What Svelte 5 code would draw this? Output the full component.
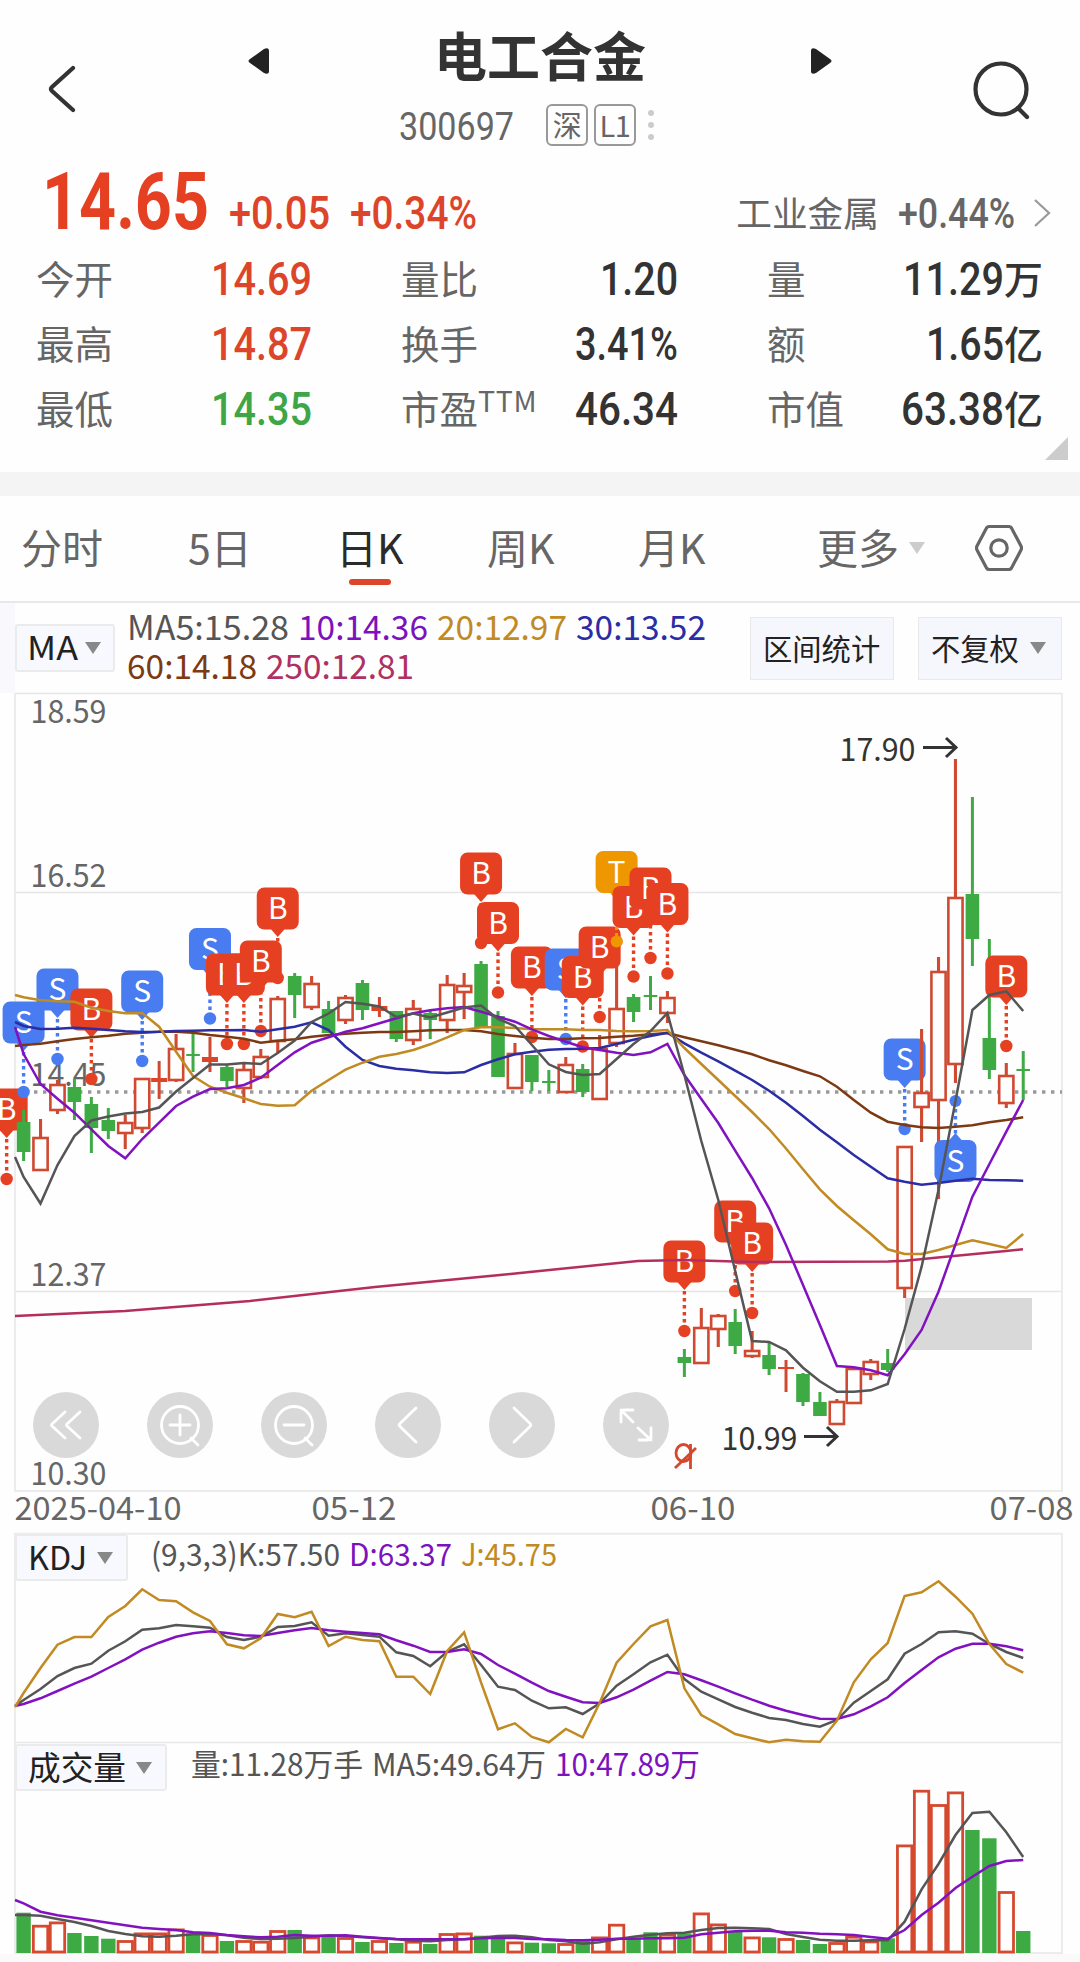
<script>
  // Horizontal position of candle i
  const STEP = 16.943;
  const cx = (i) => 23.6 + i * STEP;

  // Joins one y value per candle into a polyline, starting at the frame edge
  function line(start, ys) {
    return [`15,${start}`, ...ys.map((y, i) => `${cx(i).toFixed(1)},${y}`)].join(" ");
  }

  const quotes = [
    { label: "今开", value: "14.69", w: 101, tone: "up" },
    { label: "量比", value: "1.20", w: 78 },
    { label: "量", value: "11.29", w: 101, unit: "万" },
    { label: "最高", value: "14.87", w: 101, tone: "up" },
    { label: "换手", value: "3.41%", w: 103 },
    { label: "额", value: "1.65", w: 78, unit: "亿" },
    { label: "最低", value: "14.35", w: 101, tone: "down" },
    { label: "市盈", sup: "TTM", value: "46.34", w: 103 },
    { label: "市值", value: "63.38", w: 103, unit: "亿" },
  ];

  const tabs = ["分时", "5日", "日K", "周K", "月K"];
  let active = $state("日K");

  // kind, high, body top, body bottom, low (r = hollow, x = filled red, g = green)
  const candles = [
    ["g", 1110, 1122, 1152, 1161], ["r", 1119, 1137, 1171, 1171], ["r", 1080, 1084, 1111, 1114],
    ["g", 1079, 1087, 1102, 1120], ["g", 1097, 1104, 1128, 1153], ["g", 1108, 1120, 1131, 1139],
    ["r", 1115, 1122, 1134, 1149], ["r", 1078, 1078, 1129, 1133], ["x", 1061, 1078, 1082, 1099],
    ["r", 1034, 1048, 1081, 1082], ["g", 1034, 1054, 1056, 1072], ["x", 1037, 1057, 1062, 1072],
    ["g", 1064, 1067, 1081, 1087], ["r", 1064, 1069, 1089, 1103], ["r", 1049, 1056, 1078, 1079],
    ["r", 996, 998, 1042, 1053], ["g", 973, 976, 995, 1018], ["r", 976, 983, 1008, 1010],
    ["g", 1001, 1009, 1033, 1033], ["r", 995, 997, 1021, 1024], ["g", 980, 983, 1010, 1020],
    ["x", 997, 1006, 1011, 1017], ["g", 1011, 1011, 1039, 1042], ["r", 1000, 1008, 1041, 1045],
    ["g", 1010, 1013, 1020, 1039], ["r", 975, 984, 1021, 1033], ["r", 973, 985, 993, 1019],
    ["g", 961, 964, 1027, 1027], ["g", 1011, 1016, 1077, 1077], ["r", 1043, 1053, 1089, 1089],
    ["g", 1055, 1055, 1082, 1091], ["g", 1070, 1081, 1083, 1091], ["r", 1057, 1064, 1093, 1093],
    ["g", 1064, 1069, 1092, 1097], ["r", 1035, 1048, 1100, 1100], ["r", 960, 1008, 1044, 1047],
    ["g", 994, 997, 1012, 1022], ["g", 976, 995, 997, 1010], ["r", 991, 997, 1014, 1023],
    ["g", 1349, 1357, 1363, 1377], ["r", 1308, 1327, 1364, 1364], ["r", 1314, 1315, 1330, 1347],
    ["g", 1309, 1322, 1346, 1354], ["r", 1331, 1350, 1357, 1358], ["g", 1343, 1355, 1369, 1375],
    ["x", 1360, 1367, 1369, 1392], ["g", 1373, 1374, 1402, 1406], ["g", 1392, 1402, 1416, 1416],
    ["r", 1399, 1401, 1425, 1425], ["r", 1367, 1368, 1404, 1404], ["r", 1359, 1361, 1375, 1380],
    ["g", 1349, 1363, 1370, 1372], ["r", 1146, 1146, 1289, 1298], ["r", 1029, 1092, 1108, 1142],
    ["r", 957, 971, 1101, 1199], ["r", 759, 897, 1065, 1083], ["g", 797, 894, 939, 966],
    ["g", 939, 1038, 1070, 1079], ["r", 1063, 1075, 1104, 1108], ["g", 1051, 1069, 1071, 1100],
  ];

  // Trade marks: candle index, letter, top of the badge
  const backMarks = [[-1, "B", 1089], [52, "S", 1039]];
  const marks = [
    [0, "S", 1002], [2, "S", 969], [4, "B", 989], [7, "S", 971], [11, "S", 928.5],
    [12, "B", 954], [13, "B", 954], [14, "B", 941], [15, "B", 888], [27, "B", 853],
    [28, "B", 902.5], [30, "B", 947], [32, "S", 949], [33, "B", 956.5], [34, "B", 927],
    [35, "T", 851.5], [36, "B", 886.5], [37, "B", 868], [38, "B", 883.5], [39, "B", 1241],
    [42, "B", 1201], [43, "B", 1223], [58, "B", 956],
  ];
  const markColor = { B: "#e64023", S: "#497cf0", T: "#ee9700" };

  const averages = [
    { color: "#b52d5e", points: "15,1316 125,1311 250,1301 375,1287 500,1275 638,1261 684,1260 718,1261 751,1262 888,1261.5 905,1260.7 938,1257.5 972,1254.3 1006,1251 1023,1249.3" },
    { color: "#7d3a12", points: line(1046, [1045, 1043.7, 1041.3, 1039, 1037.3, 1035.7, 1033.7, 1032.7, 1031.7, 1031.7, 1032.7, 1035, 1036.7, 1038.7, 1042.7, 1040.7, 1039.3, 1036.7, 1035, 1033.7, 1032.7, 1032, 1032, 1031.3, 1030.3, 1030, 1030, 1031.3, 1034, 1036, 1037.7, 1039, 1039, 1038.3, 1038, 1036.7, 1035.7, 1034.3, 1033, 1037.3, 1041.3, 1045.3, 1049.7, 1054.3, 1060.3, 1065.3, 1071, 1076.3, 1086.7, 1100, 1112.7, 1121.7, 1125, 1127.3, 1128, 1126.7, 1125.3, 1122.3, 1120, 1117.3]) },
    { color: "#2b2da5", points: line(1022, [1026, 1029, 1028.7, 1027.7, 1028.7, 1030, 1031.3, 1032, 1031.7, 1031, 1030.7, 1030.3, 1030.3, 1030, 1031.7, 1029.3, 1026.7, 1022.3, 1030, 1046.7, 1060, 1066, 1068.7, 1070.3, 1072.3, 1073, 1072.3, 1065, 1059.3, 1054.3, 1051.7, 1049.7, 1049, 1048.7, 1048, 1044, 1039.7, 1036, 1032.7, 1043.3, 1052.7, 1061.3, 1070.7, 1080, 1090.7, 1102.7, 1116, 1129.7, 1142.3, 1155, 1166.7, 1178.3, 1181.7, 1184.7, 1183, 1180.7, 1178.7, 1180, 1180.3, 1180.7]) },
    { color: "#c18a22", points: line(995, [997.3, 1000.3, 1001.3, 1001.7, 1007.7, 1011, 1013.3, 1013, 1026.7, 1051.7, 1076, 1086.7, 1092.7, 1098.3, 1104, 1105.7, 1105.3, 1090.7, 1080, 1069.7, 1062.7, 1056.7, 1054, 1050, 1044.3, 1037.3, 1030, 1027.3, 1027.3, 1028, 1029.3, 1029.3, 1029.3, 1030, 1030, 1031, 1031.3, 1031, 1030, 1048, 1064, 1080, 1096, 1112, 1129, 1148.5, 1169.3, 1189.3, 1206, 1220.3, 1234.3, 1249.3, 1254, 1254, 1250, 1245, 1240.3, 1244, 1248, 1234]) },
    { color: "#8212c0", points: line(1027, [1054, 1084, 1098.7, 1112.7, 1129.3, 1146, 1158.3, 1139, 1122.7, 1106, 1096.7, 1089, 1088.3, 1085, 1077.7, 1065, 1052.3, 1042.7, 1037.3, 1031.7, 1028.3, 1023.3, 1018.3, 1013.3, 1010.3, 1008.3, 1007, 1011.7, 1016.7, 1021.7, 1029.3, 1036, 1041.7, 1047.3, 1050, 1052.7, 1055, 1052.3, 1044, 1075, 1099, 1123, 1150.7, 1178, 1208.3, 1245, 1285, 1325, 1366, 1367.3, 1370.3, 1375.3, 1354.3, 1330, 1291.7, 1244.3, 1196.7, 1164, 1131.7, 1100]) },
    { color: "#555", points: line(1157, [1177, 1203.5, 1165, 1136, 1120.5, 1116.5, 1113.5, 1112, 1107.5, 1091.5, 1078, 1064.5, 1064.5, 1063, 1064, 1053, 1040.5, 1022, 1013.5, 1002, 1003.8, 1006.5, 1017, 1013.5, 1017.5, 1012.5, 1007.5, 1005.5, 1019, 1026, 1045, 1064.3, 1072, 1075, 1074, 1059, 1044, 1031, 1013, 1075, 1141, 1200, 1271, 1341, 1342, 1350.3, 1367.7, 1381.3, 1391.7, 1391.7, 1390.3, 1384, 1329, 1266.7, 1190, 1101, 1010, 995, 991.3, 1011]) },
  ];

  const kdj = [
    { color: "#555", points: line(1706, [1700, 1689, 1676, 1668, 1663.7, 1650.7, 1641.3, 1629.7, 1628.3, 1625, 1626.3, 1627.7, 1637, 1640, 1636.7, 1627, 1626, 1622.3, 1635.7, 1633.3, 1635, 1636.7, 1652.3, 1656, 1666.3, 1651.7, 1644.3, 1665, 1686.7, 1690, 1700.7, 1708.3, 1707.3, 1714, 1703.3, 1685.7, 1674.3, 1662.3, 1654.7, 1679, 1691.7, 1699.3, 1707, 1712.7, 1718, 1720, 1724, 1726.7, 1720, 1702.7, 1691, 1679.3, 1653.7, 1644, 1632.3, 1631.3, 1633.7, 1644, 1652, 1658]) },
    { color: "#8212c0", points: line(1706, [1704, 1698.3, 1691, 1683.7, 1676.7, 1668, 1659.3, 1649.7, 1642.7, 1636.7, 1633.3, 1631.3, 1633, 1635.3, 1636, 1633, 1630.3, 1628, 1630.3, 1631.7, 1633, 1634.3, 1640.3, 1645.7, 1652, 1652, 1649.3, 1654, 1665, 1673.7, 1682.7, 1691, 1696.7, 1702.3, 1703, 1697.3, 1689.7, 1680.7, 1672, 1674.3, 1680.3, 1686.7, 1693.3, 1699.7, 1705.7, 1710.7, 1715, 1718.7, 1719, 1714.3, 1706.3, 1697.3, 1683, 1670, 1657.3, 1648.7, 1643.7, 1643.7, 1646.3, 1650.3]) },
    { color: "#c18a22", points: line(1707, [1693, 1668, 1644.7, 1637, 1637, 1617, 1606, 1589.3, 1600, 1601.3, 1612.3, 1621, 1644.3, 1648.3, 1638.3, 1614, 1617.3, 1611.7, 1646, 1636.7, 1640, 1641.3, 1676.7, 1676.7, 1694, 1651, 1632.3, 1682.7, 1729.3, 1723.3, 1737, 1742.3, 1729, 1737.3, 1702.7, 1662.7, 1644, 1626.3, 1620, 1688.3, 1715, 1724.3, 1734, 1738.3, 1742.3, 1739.7, 1741.3, 1741.7, 1720.7, 1682.3, 1659.3, 1643, 1596, 1592.3, 1581.3, 1596.7, 1613.7, 1644, 1664, 1672.7]) },
  ];

  const BASE = 1953;
  const volumeTops = [1912.7, 1925, 1921.7, 1933, 1936, 1938.7, 1940.3, 1932.7, 1932.7, 1928.7, 1933.3, 1934.3, 1941, 1940.3, 1941, 1930.3, 1930, 1936.7, 1936.7, 1937.3, 1942, 1940.3, 1943, 1941, 1944, 1933.3, 1932.7, 1935.7, 1936, 1941.7, 1942.7, 1943.3, 1943.3, 1940.7, 1936.7, 1924, 1939, 1932.3, 1934, 1933.3, 1912.7, 1923.7, 1931.7, 1936.7, 1937.3, 1938.3, 1940, 1944, 1942.3, 1936, 1940.7, 1938.3, 1844.7, 1790, 1804.3, 1791.7, 1830, 1838.3, 1891.3, 1931];
  const volumeKinds = "grrgggrrrrgrgrrrgrgrgrgrgrrggrggrgrrggrgrrgrgrggrrrgrrrrggrg";
  const volumeLines = [
    { color: "#555", points: line(1915, [1915, 1915.7, 1919, 1922, 1926, 1931, 1934, 1936.3, 1936.7, 1935.7, 1934.3, 1934, 1935.3, 1937.7, 1939, 1938.7, 1938, 1936.7, 1935.3, 1936, 1937.3, 1938.3, 1939.3, 1940.7, 1941.3, 1940, 1939.3, 1937.7, 1936, 1935.7, 1937.3, 1940, 1941.3, 1943.7, 1942.3, 1939.3, 1936.7, 1934.7, 1933.3, 1932.7, 1930, 1928, 1927.7, 1928.3, 1929, 1934, 1937, 1939.7, 1940.7, 1940.7, 1940.3, 1940.3, 1921.7, 1889.3, 1864, 1835, 1813, 1811.7, 1832.3, 1857]) },
    { color: "#8212c0", points: line(1900, [1903.3, 1911.7, 1915.3, 1917.7, 1920.3, 1922.7, 1925.3, 1927.7, 1929, 1930, 1932.3, 1933, 1935, 1936.3, 1937.3, 1936.7, 1935, 1935.7, 1935.7, 1935.3, 1936.7, 1938, 1939, 1939.3, 1939.3, 1939.3, 1939.3, 1938.3, 1937.7, 1938, 1939, 1939.3, 1940, 1940.3, 1939.7, 1938.7, 1938.7, 1938.3, 1938.3, 1937.7, 1934.3, 1932.7, 1931.3, 1930.7, 1930.7, 1932.3, 1932.7, 1933.7, 1934.3, 1935, 1937, 1938.7, 1930, 1915, 1902.7, 1888, 1876.7, 1866, 1861, 1860]) },
  ];
</script>

<!-- Single line of text set to a fixed advance width -->
{#snippet fit(text, w, size, cls = "")}
  <svg class="fit {cls}" width={w} height={size}>
    <text x="0" y={size * 0.86} font-size={size} textLength={w} lengthAdjust="spacingAndGlyphs">{text}</text>
  </svg>
{/snippet}

{#snippet label(text, x, y, w, size = 31.5)}
  <text {x} {y} font-size={size} textLength={w} lengthAdjust="spacingAndGlyphs">{text}</text>
{/snippet}

{#snippet caret()}
  <svg class="caret" width="16" height="12" viewBox="0 0 16 12"><path d="M0 0H16L8 12Z" fill="currentColor" /></svg>
{/snippet}

{#snippet candle(i)}
  {@const [kind, high, top, bottom, low] = candles[i]}
  {@const x = cx(i)}
  {#if kind === "r"}
    <path d="M{x} {high}V{top}M{x} {bottom}V{low}" stroke="#cf4a31" stroke-width="3.1" />
    <rect x={x - 7.1} y={top + 1} width="14.2" height={bottom - top - 2} fill="#fefefe" stroke="#cf4a31" stroke-width="2.6" />
  {:else}
    <path d="M{x} {high}V{low}" stroke={kind === "g" ? "#3faa46" : "#cf4a31"} stroke-width="3" />
    <rect x={x - (kind === "g" ? 6.8 : 8)} y={top} width={kind === "g" ? 13.6 : 16} height={bottom - top} fill={kind === "g" ? "#3daa44" : "#dc4529"} />
  {/if}
{/snippet}

{#snippet stem(i, letter, top)}
  {@const x = cx(i)}
  <path d="M{x} {top + 50}V{top + 85}" stroke={markColor[letter]} stroke-width="3.4" stroke-dasharray="3.6 3.4" />
  <circle cx={x} cy={top + 90} r="6.2" fill={markColor[letter]} />
{/snippet}

{#snippet badge(i, letter, top)}
  {@const x = cx(i)}
  <path d="M{x - 7} {top + 41}H{x + 7}L{x} {top + 49}Z" fill={markColor[letter]} />
  <rect x={x - 21} y={top - 0.5} width="42" height="42" rx="7.5" fill={markColor[letter]} />
  <text class="letter" {x} y={top + 31} font-size="30">{letter}</text>
{/snippet}

<div class="app">
  <header>
    <svg class="back" width="28" height="48" viewBox="0 0 28 48"><path d="M25 3L4 22Q2 24 4 26L25 45" /></svg>
    <div class="heading">
      <div class="title-row">
        <svg width="22" height="28" viewBox="0 0 22 28"><path d="M2 12L16 2Q21 0 21 4V24Q21 28 16 26L2 16Q-1 14 2 12Z" fill="#222" /></svg>
        <h1>电工合金</h1>
        <svg width="22" height="28" viewBox="0 0 22 28"><path d="M20 12L6 2Q1 0 1 4V24Q1 28 6 26L20 16Q23 14 20 12Z" fill="#222" /></svg>
      </div>
      <div class="code-row">
        {@render fit("300697", 115, 39, "code")}
        <span class="tag">深</span>
        <span class="tag">L1</span>
        <i class="dots"></i>
      </div>
    </div>
    <svg class="search" width="60" height="62" viewBox="0 0 60 62"><circle cx="28" cy="28" r="25.5" /><path d="M45 47L54 56" /></svg>
  </header>

  <section class="price up">
    {@render fit("14.65", 167, 79, "num big")}
    {@render fit("+0.05", 101, 45.5, "num mid")}
    {@render fit("+0.34%", 127, 45.5, "num mid")}
    <span class="sector">工业金属</span>
    {@render fit("+0.44%", 117, 43, "num rate")}
    <svg class="more" width="18" height="30" viewBox="0 0 18 30"><path d="M2 2L16 15L2 28" /></svg>
  </section>

  <section class="quotes">
    {#each quotes as q}
      <div class="quote">
        <span class="name">{q.label}{#if q.sup}<sup>{q.sup}</sup>{/if}</span>
        <span class="value {q.tone ?? ''}">{@render fit(q.value, q.w, 45.5, "num")}{#if q.unit}<b>{q.unit}</b>{/if}</span>
      </div>
    {/each}
  </section>
  <div class="corner"></div>

  <nav>
    {#each tabs as tab}
      <button class:active={active === tab} onclick={() => (active = tab)}>{tab}</button>
    {/each}
    <button class="drop">更多{@render caret()}</button>
    <svg class="gear" width="48" height="48" viewBox="0 0 48 48"><path d="M14 2.5H34Q35.500 2.500 36.500 4L46 22Q47 24 46 26L36.500 44Q35.500 45.500 34 45.500H14Q12.500 45.500 11.500 44L2 26Q1 24 2 22L11.500 4Q12.500 2.500 14 2.500Z" /><circle cx="24" cy="24" r="8.2" /></svg>
  </nav>

  <section class="toolbar">
    <button class="pick ma">{@render fit("MA", 51, 33)}{@render caret()}</button>
    <div class="legend">
      <div>
        {@render fit("MA5:15.28", 162, 33.5, "c5")}
        {@render fit("10:14.36", 130, 33.5, "c10")}
        {@render fit("20:12.97", 130, 33.5, "c20")}
        {@render fit("30:13.52", 130, 33.5, "c30")}
      </div>
      <div>
        {@render fit("60:14.18", 130, 33.5, "c60")}
        {@render fit("250:12.81", 148, 33.5, "c250")}
      </div>
    </div>
    <button class="box">区间统计</button>
    <button class="box">不复权{@render caret()}</button>
  </section>

  <svg class="chart" width="1080" height="840" viewBox="0 693 1080 840">
    <path d="M15 892.500H1062M15 1291.500H1062" stroke="#e6e6e6" stroke-width="1.4" />
    <path d="M15 693.500H1062" stroke="#e6e6e6" stroke-width="1.3" />
    <path d="M15 693V1491H1062V693" fill="none" stroke="#ececec" stroke-width="2" />
    <path d="M16 1092H1062" stroke="#999" stroke-width="3.4" stroke-dasharray="3.4 5.6" />

    <g fill="#666">
      {@render label("18.59", 30.5, 723, 76)}
      {@render label("16.52", 30.5, 887, 76)}
      {@render label("14.45", 30.5, 1086, 76)}
      {@render label("12.37", 30.5, 1286, 76)}
      {@render label("10.30", 30.5, 1485, 76)}
      {@render label("2025-04-10", 14.5, 1520, 167)}
      {@render label("05-12", 311.5, 1520, 85)}
      {@render label("06-10", 650.5, 1520, 85)}
      {@render label("07-08", 989.5, 1520, 84)}
    </g>

    {#each backMarks as [i, letter, top]}
      {@render stem(i, letter, top)}
      {@render badge(i, letter, top)}
    {/each}

    {#each candles as _, i}
      {@render candle(i)}
    {/each}

    {#each marks as [i, letter, top]}
      {@render stem(i, letter, top)}
    {/each}
    {#each marks as [i, letter, top]}
      {@render badge(i, letter, top)}
    {/each}
    <path d="M{cx(35)} 927V936" stroke={markColor.T} stroke-width="3" stroke-dasharray="3 3" />
    <circle cx={cx(35)} cy="941.5" r="6" fill={markColor.T} />

    <!-- mark hanging below its candle -->
    <circle cx={cx(55)} cy="1101" r="6" fill={markColor.S} />
    <path d="M{cx(55)} 1109V1134" stroke={markColor.S} stroke-width="3.4" stroke-dasharray="3.6 3.4" />
    <path d="M{cx(55) - 7} 1141H{cx(55) + 7}L{cx(55)} 1133Z" fill={markColor.S} />
    <rect x={cx(55) - 21} y="1140" width="42" height="42" rx="7.5" fill={markColor.S} />
    <text class="letter" x={cx(55)} y="1171.5" font-size="30">S</text>

    <rect x="905" y="1298" width="127" height="52" fill="#d9d9d9" />

    {#each averages as avg}
      <polyline points={avg.points} stroke={avg.color} class="trend" />
    {/each}

    <g fill="#333">
      {@render label("17.90", 839.5, 760.5, 76)}
      {@render label("10.99", 721.5, 1449.5, 76)}
    </g>
    <g class="arrow">
      <path d="M923 747.500H955M946 738L956 747.500L946 757" />
      <path d="M804 1436.500H836M827 1427L837 1436.500L827 1446" />
    </g>

    <g fill="none" stroke="#d4482e" stroke-width="2.8">
      <ellipse cx="683.5" cy="1453" rx="7.5" ry="8.5" />
      <path d="M690.500 1444V1469M675 1468L696 1448" />
    </g>

    <g class="tools">
      {#each [66, 180, 294, 408, 522, 636] as x}
        <circle class="disc" cx={x} cy="1425" r="33" />
      {/each}
      <path d="M65 1412L52 1424Q51 1425 52 1426L65 1438M80 1412L67 1424Q66 1425 67 1426L80 1438" />
      <circle cx="180" cy="1425" r="18.5" />
      <path d="M170 1425H190M180 1415V1435M191 1438L198 1445" />
      <circle cx="294" cy="1425" r="18.5" />
      <path d="M284 1425H304M305 1438L312 1445" />
      <path d="M416 1408L400 1423.500Q398.500 1425 400 1426.500L416 1442" />
      <path d="M514 1408L530 1423.500Q531.500 1425 530 1426.500L514 1442" />
      <path d="M633 1422L621 1410M621 1422V1413Q621 1410 624 1410H633M638 1428L651 1440M651 1428V1437Q651 1440 648 1440H639" />
    </g>
  </svg>

  <section class="panel kdj">
    <svg class="chart" width="1080" height="210" viewBox="0 1533 1080 210">
      <path d="M15 1743V1533.700H1062V1743" fill="none" stroke="#ececec" stroke-width="2" />
      <path d="M15 1742.500H1062" stroke="#e8e8e8" stroke-width="1.5" />
      {#each kdj as k}
        <polyline points={k.points} stroke={k.color} class="trend" />
      {/each}
    </svg>
    <div class="bar">
      <button class="pick">{@render fit("KDJ", 59, 33)}{@render caret()}</button>
      <div class="values">
        {@render fit("(9,3,3)K:57.50", 189, 31, "c5")}
        {@render fit("D:63.37", 103, 31, "c10")}
        {@render fit("J:45.75", 96, 31, "c20")}
      </div>
    </div>
  </section>

  <section class="panel volume">
    <svg class="chart" width="1080" height="219" viewBox="0 1743 1080 219">
      <path d="M15 1743V1953H1062V1743" fill="none" stroke="#ececec" stroke-width="2" />
      {#each volumeTops as top, i}
        {#if volumeKinds[i] === "r"}
          <rect x={cx(i) - 7.2} y={top + 1.2} width="14.4" height={BASE - top - 2.2} fill="#fefefe" stroke="#d5492f" stroke-width="2.8" />
        {:else}
          <rect x={cx(i) - 7.2} y={top} width="14.4" height={BASE - top} fill="#3daa44" />
        {/if}
      {/each}
      {#each volumeLines as v}
        <polyline points={v.points} stroke={v.color} class="trend" />
      {/each}
      <rect x="0" y="1954" width="1080" height="8" fill="#fafafa" />
    </svg>
    <div class="bar">
      <button class="pick vol">{@render fit("成交量", 98, 33)}{@render caret()}</button>
      <div class="values">
        {@render fit("量:11.28万手", 172, 31, "c5")}
        {@render fit("MA5:49.64万", 174, 31, "c5")}
        {@render fit("10:47.89万", 145, 31, "c10")}
      </div>
    </div>
  </section>
</div>

<style>
  :global(body) {
    margin: 0;
    background: #fefefe;
  }

  .app {
    width: 1080px;
    height: 1962px;
    overflow: hidden;
    font-family: "Noto Sans CJK SC", "Noto Sans", sans-serif;
    color: #333;
    background: #fefefe;
  }

  svg {
    display: block;
    flex: none;
  }

  button {
    font: inherit;
    color: inherit;
    padding: 0;
    border: 0;
    background: none;
    text-align: left;
    white-space: nowrap;
  }

  .fit,
  .chart {
    overflow: visible;
  }

  .fit text {
    fill: currentColor;
  }

  .num {
    font-family: Roboto, "Noto Sans CJK SC", sans-serif;
    font-weight: 500;
  }

  .up { color: #dd452a; }
  .down { color: #3fa648; }

  header {
    display: flex;
    height: 158px;
    box-sizing: border-box;
    padding: 0 47px 0 48px;
  }

  .back {
    margin-top: 65px;
  }

  .back path,
  .search {
    fill: none;
    stroke: #333;
    stroke-width: 4.2;
    stroke-linecap: round;
  }

  .search {
    margin-top: 61px;
    margin-left: auto;
  }

  .heading {
    margin-left: 172px;
    width: 584px;
  }

  .title-row {
    display: flex;
    justify-content: space-between;
    align-items: center;
    height: 80px;
    padding-top: 16px;
  }

  h1 {
    margin: 0 0 12px;
    padding-top: 8px;
    font-size: 53px;
    line-height: 60px;
    font-weight: 700;
  }

  .title-row svg {
    margin-top: 9px;
  }

  .code-row {
    display: flex;
    align-items: center;
    height: 44px;
    margin-top: 7px;
    padding-left: 151px;
    color: #666;
  }

  .code {
    font-family: Roboto, sans-serif;
    margin-right: 32px;
  }

  .tag {
    width: 38px;
    height: 38px;
    margin-right: 6px;
    border: 2px solid #999;
    border-radius: 6px;
    font-size: 29px;
    line-height: 36px;
    text-align: center;
    letter-spacing: -0.5px;
  }

  .dots {
    width: 6px;
    height: 6px;
    margin-left: 6px;
    border-radius: 50%;
    background: #ccc;
    box-shadow: 0 -12px #ccc, 0 12px #ccc;
  }

  .price {
    display: flex;
    align-items: flex-end;
    height: 89px;
    padding: 0 29px 0 42px;
    box-sizing: border-box;
  }

  .big {
    font-weight: 700;
    margin: 0 20px 7px 0;
    color: #e64023;
  }

  .mid {
    margin: 0 20px 12px 0;
  }

  .sector {
    margin-left: auto;
    font-size: 35.7px;
    line-height: 36px;
    margin-bottom: 17px;
    color: #666;
  }

  .rate {
    margin: 0 18px 13px 19px;
    color: #666;
  }

  .more {
    margin-bottom: 19px;
    fill: none;
    stroke: #999;
    stroke-width: 2.2;
  }

  .quotes {
    display: grid;
    grid-template-columns: 276px 277px 276px;
    column-gap: 89px;
    grid-auto-rows: 65px;
    padding-left: 36px;
  }

  .quote {
    display: flex;
    justify-content: space-between;
    align-items: center;
    font-size: 38.5px;
    line-height: 65px;
  }

  .name {
    margin-top: -4px;
    color: #666;
    white-space: nowrap;
  }

  sup {
    font-size: 28.5px;
    line-height: 1;
    vertical-align: 12px;
    letter-spacing: 0.7px;
  }

  .value {
    display: flex;
    align-items: center;
    margin-top: -1px;
  }

  .value b {
    font-size: 39px;
    font-weight: 500;
    height: 65px;
    line-height: 61px;
  }

  .corner {
    width: 0;
    height: 0;
    margin: -5px 12px 12px auto;
    border-left: 23px solid transparent;
    border-bottom: 23px solid #ccc;
  }

  nav {
    display: grid;
    grid-template-columns: 167px 148px 151px 151px 179px 158px auto;
    align-items: center;
    height: 105px;
    padding-left: 21px;
    border-top: 24px solid #f4f4f4;
    border-bottom: 2px solid #e8e8e8;
    font-size: 41px;
    color: #666;
  }

  nav button {
    position: relative;
    justify-self: start;
    margin-top: -5px;
    line-height: 60px;
  }

  nav .gear {
    margin-top: -2px;
  }

  nav .active {
    color: #2b2b2b;
  }

  nav .active::after {
    content: "";
    position: absolute;
    left: 50%;
    bottom: -9px;
    width: 42px;
    height: 6px;
    margin-left: -21px;
    border-radius: 3px;
    background: #dd452a;
  }

  .drop {
    display: flex;
    align-items: center;
    gap: 10px;
  }

  .drop .caret {
    margin-top: 4px;
    color: #ccc;
  }

  .gear {
    fill: none;
    stroke: #666;
    stroke-width: 3.2;
  }

  .caret {
    color: #888;
  }

  .toolbar {
    display: flex;
    align-items: center;
    height: 90px;
    padding-right: 18px;
    border-left: 15px solid #f9f9fd;
  }

  .pick {
    display: flex;
    align-items: center;
    gap: 10px;
    height: 47px;
    padding: 0 13px 0 11px;
    box-sizing: border-box;
    border: 2px solid #ebebeb;
    border-radius: 3px;
    background: #f8f9fe;
    color: #222;
  }

  .pick .fit {
    margin-top: 1px;
  }

  .ma {
    gap: 7px;
    height: 48px;
    padding: 0 12px 0 10px;
  }

  .legend {
    display: flex;
    flex-direction: column;
    gap: 5.5px;
    margin: 0 auto 2px 12px;
  }

  .legend div,
  .values {
    display: flex;
    gap: 9px;
  }

  .c5 { color: #555; }
  .c10 { color: #7b12bd; }
  .c20 { color: #c18a22; }
  .c30 { color: #2b2da5; }
  .c60 { color: #7d3a12; }
  .c250 { color: #b03062; }

  .box {
    display: flex;
    align-items: center;
    gap: 11px;
    width: 144px;
    height: 63px;
    margin-left: 24px;
    padding: 0 0 3px 12px;
    box-sizing: border-box;
    border: 1px solid #e9e9ec;
    background: #f6f7fd;
    font-size: 29.3px;
    color: #222;
  }

  .box .caret {
    margin-top: 3px;
  }

  .toolbar .box:nth-last-child(2) {
    margin-left: 0;
  }

  .letter {
    fill: #fff;
    text-anchor: middle;
  }

  .trend,
  .arrow {
    fill: none;
    stroke-width: 2.5;
  }

  .arrow {
    stroke: #333;
    stroke-width: 3;
  }

  .tools {
    fill: none;
    stroke: #fff;
    stroke-width: 2.8;
    stroke-linecap: round;
  }

  .tools .disc {
    fill: #d9d9d9;
    stroke: none;
  }

  .panel {
    display: grid;
  }

  .panel > * {
    grid-area: 1 / 1;
  }

  .bar {
    display: flex;
    align-items: flex-start;
    padding: 1px 0 0 15px;
  }

  .values {
    margin: 4.5px 0 0 23px;
  }

  .volume .values {
    margin-left: 24px;
    gap: 9px;
  }
</style>
